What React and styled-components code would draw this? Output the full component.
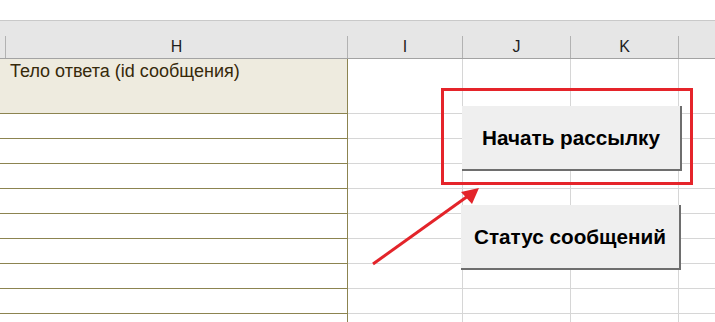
import React from "react";
import styled, { createGlobalStyle } from "styled-components";

const Global = createGlobalStyle`
  html, body { margin: 0; padding: 0; background: #ffffff; }
  body { font-family: "Liberation Sans", Arial, sans-serif; }
`;

const OLIVE = "#8c8450";
const GRID = "#d6d6d6";
const COLS = "6px 342px 115px 108px 108px 1fr";

const Sheet = styled.div`
  position: relative;
  width: 715px;
  height: 322px;
  overflow: hidden;
  background: #fff;
`;

const TopStrip = styled.div`
  height: 20px;
  border-bottom: 1px solid #c9c9c9;
  background: #fff;
`;

const HeaderBand = styled.div`
  background: #e6e6e6;
  padding-top: 15px;
  border-bottom: 1px solid #a3a3a3;
`;

const HeaderRow = styled.div`
  display: grid;
  grid-template-columns: ${COLS};
  height: 22px;
`;

const HeaderCell = styled.div`
  box-sizing: border-box;
  border-right: ${(p) => (p.$last ? "none" : "1px solid #b2b2b2")};
  font-size: 16px;
  line-height: 22px;
  color: #1e1e1e;
  text-align: center;
`;

const Row = styled.div`
  display: grid;
  grid-template-columns: ${COLS};
  height: ${(p) => p.$h}px;
`;

const Cell = styled.div`
  box-sizing: border-box;
  border-bottom: 1px solid ${(p) => (p.$olive ? OLIVE : GRID)};
  border-right: ${(p) => (p.$last ? "none" : `1px solid ${p.$olive ? OLIVE : GRID}`)};
  background: ${(p) => (p.$fill ? "#eeebdf" : "#fff")};
  padding: 2px 4px 0;
  font-size: 18px;
  line-height: 20px;
  color: #36290a;
  white-space: nowrap;
`;

const Frame = styled.div`
  position: absolute;
  left: 441px;
  top: 88px;
  width: 252px;
  height: 97px;
  box-sizing: border-box;
  border: 3px solid #e5242a;
  pointer-events: none;
`;

const MacroButton = styled.div`
  position: absolute;
  left: ${(p) => p.$x}px;
  top: ${(p) => p.$y}px;
  width: 220px;
  height: ${(p) => p.$h}px;
  box-sizing: border-box;
  background: #efefef;
  border-right: 2px solid #6e6e6e;
  border-bottom: 2px solid #6e6e6e;
  display: flex;
  align-items: center;
  justify-content: center;
  font-family: "Liberation Sans", Arial, sans-serif;
  font-weight: bold;
  font-size: 20.7px;
  color: #000;
  white-space: nowrap;
`;

const Overlay = styled.svg`
  position: absolute;
  left: 0;
  top: 0;
  pointer-events: none;
`;

const letters = ["", "H", "I", "J", "K", ""];

export default function App() {
  const rows = [];
  rows.push({ h: 55, first: true });
  for (let i = 0; i < 9; i++) rows.push({ h: 25 });

  return (
    <>
      <Global />
      <Sheet>
        <TopStrip />
        <HeaderBand>
          <HeaderRow>
            {letters.map((l, i) => (
              <HeaderCell key={i} $last={i === 5}>
                {l}
              </HeaderCell>
            ))}
          </HeaderRow>
        </HeaderBand>
        {rows.map((r, ri) => (
          <Row key={ri} $h={r.h}>
            <Cell $olive $fill={r.first} />
            <Cell $olive $fill={r.first}>
              {r.first ? "Тело ответа (id сообщения)" : ""}
            </Cell>
            <Cell />
            <Cell />
            <Cell />
            <Cell $last />
          </Row>
        ))}

        <Frame />
        <MacroButton $x={462} $y={106} $h={65}>
          Начать рассылку
        </MacroButton>
        <MacroButton $x={461} $y={205} $h={65}>
          Статус сообщений
        </MacroButton>

        <Overlay width="715" height="322" viewBox="0 0 715 322">
          <line x1="373" y1="264" x2="468" y2="196" stroke="#e3242a" strokeWidth="3" />
          <polygon points="479,188 461,192 472,204" fill="#e3242a" />
        </Overlay>
      </Sheet>
    </>
  );
}
